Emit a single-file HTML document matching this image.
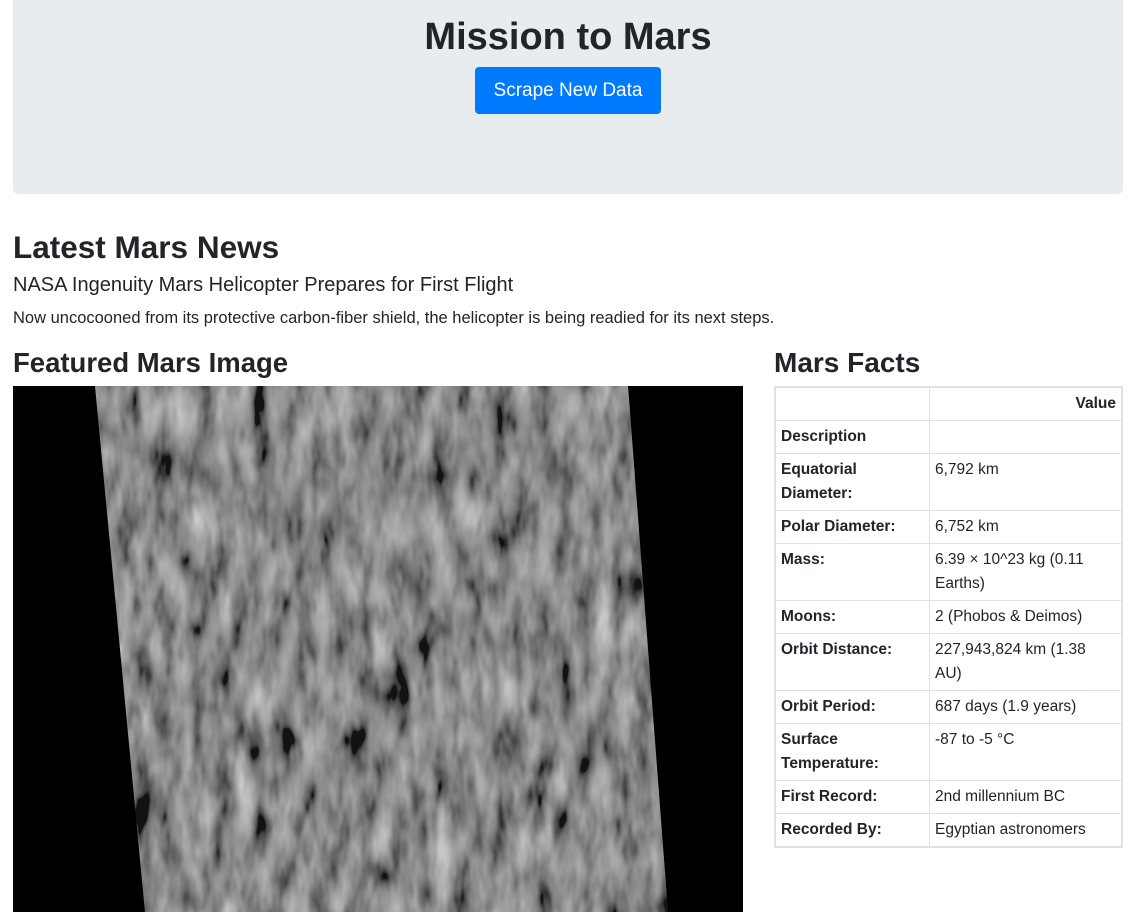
<!DOCTYPE html>
<html><head><meta charset="utf-8"><style>
body{margin:0;font-family:"Liberation Sans",Helvetica,Arial,sans-serif;color:#212529;background:#fff;width:1132px;height:912px;overflow:hidden;position:relative}
.jumbo{position:absolute;left:13px;top:0;width:1110px;height:194px;background:#e9ecef;border-radius:0 0 5px 5px;text-align:center}
.jumbo h1{margin:0;position:absolute;top:14px;left:0;right:0;font-size:38px;font-weight:bold;line-height:46px}
.btn{position:absolute;left:462px;top:67px;width:186px;height:47px;background:#007bff;color:#fff;border-radius:4px;font-size:19px;line-height:48px}
.abs{position:absolute;margin:0}
h2{font-weight:bold;line-height:36px}
table{position:absolute;left:774px;top:386px;width:349px;border-collapse:collapse;font-size:15.5px;line-height:24px;border:2px solid #dee2e6}
td,th{border:1px solid #dee2e6;padding:4px 5px 4px;vertical-align:top;text-align:left}
th{font-weight:bold}
td:first-child{width:143px;font-weight:bold}
</style></head><body>
<div class="jumbo"><h1>Mission to Mars</h1><div class="btn">Scrape New Data</div></div>
<h2 class="abs" style="left:13px;top:229px;font-size:31.5px">Latest Mars News</h2>
<div class="abs" style="left:13px;top:273px;font-size:20px;line-height:24px">NASA Ingenuity Mars Helicopter Prepares for First Flight</div>
<div class="abs" style="left:13px;top:307px;font-size:16.5px;line-height:22px">Now uncocooned from its protective carbon-fiber shield, the helicopter is being readied for its next steps.</div>
<h2 class="abs" style="left:13px;top:345px;font-size:27.5px">Featured Mars Image</h2>
<h2 class="abs" style="left:774px;top:345px;font-size:28px">Mars Facts</h2>
<svg class="abs" style="left:13px;top:386px" width="730" height="526">
<defs><filter id="t" x="0" y="0" width="100%" height="100%"><feTurbulence type="fractalNoise" baseFrequency="0.05 0.018" numOctaves="3" seed="7"/><feColorMatrix type="matrix" values="0.33 0.33 0.33 0 0 0.33 0.33 0.33 0 0 0.33 0.33 0.33 0 0 0 0 0 0 1"/><feComponentTransfer><feFuncR type="linear" slope="2.2" intercept="-0.75"/><feFuncG type="linear" slope="2.2" intercept="-0.75"/><feFuncB type="linear" slope="2.2" intercept="-0.75"/></feComponentTransfer></filter>
<clipPath id="c"><polygon points="82,0 615,0 655,526 132,526"/></clipPath></defs>
<rect width="730" height="526" fill="#000"/>
<g clip-path="url(#c)"><rect width="730" height="526" fill="#4a4a4a"/><rect width="730" height="526" filter="url(#t)" opacity="0.75"/></g>
</svg>
<table>
<tr><th></th><th style="text-align:right">Value</th></tr>
<tr><td>Description</td><td></td></tr>
<tr><td>Equatorial Diameter:</td><td>6,792 km</td></tr>
<tr><td>Polar Diameter:</td><td>6,752 km</td></tr>
<tr><td>Mass:</td><td>6.39 × 10^23 kg (0.11<br>Earths)</td></tr>
<tr><td>Moons:</td><td>2 (Phobos &amp; Deimos)</td></tr>
<tr><td>Orbit Distance:</td><td>227,943,824 km (1.38<br>AU)</td></tr>
<tr><td>Orbit Period:</td><td>687 days (1.9 years)</td></tr>
<tr><td>Surface Temperature:</td><td>-87 to -5 °C</td></tr>
<tr><td>First Record:</td><td>2nd millennium BC</td></tr>
<tr><td>Recorded By:</td><td>Egyptian astronomers</td></tr>
</table>
</body></html>
